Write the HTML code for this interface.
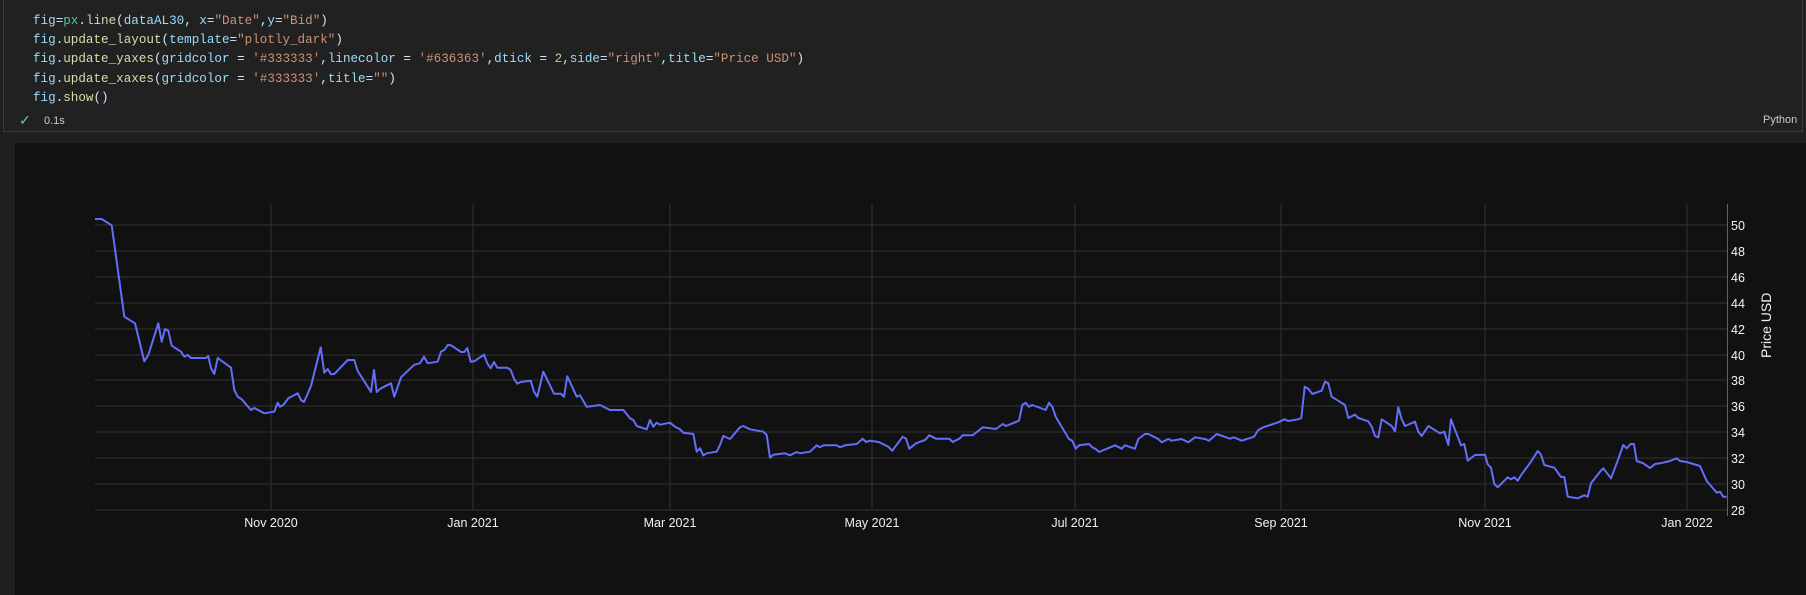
<!DOCTYPE html>
<html><head><meta charset="utf-8"><style>
html,body{margin:0;padding:0;width:1806px;height:595px;background:#1f1f1f;overflow:hidden;font-family:"Liberation Sans",sans-serif}
.cell{position:absolute;left:3px;top:-1px;width:1798px;height:131px;border:1px solid #3a3a3a;background:#212121}
.code{position:absolute;left:33px;top:12px;font-family:"Liberation Mono",monospace;font-size:12.6px;line-height:19.2px;color:#cfe6ff;white-space:pre}
.v{color:#9cdcfe}.g{color:#4ec9b0}.f{color:#dcdcaa}.s{color:#ce9178}.n{color:#b5cea8}
.out{position:absolute;left:15px;top:143px;width:1791px;height:452px;background:#111111}
</style></head><body>
<div class="cell"></div>
<div class="code"><span class="v">fig</span>=<span class="g">px</span>.<span class="f">line</span>(<span class="v">dataAL30</span>, <span class="v">x</span>=<span class="s">"Date"</span>,<span class="v">y</span>=<span class="s">"Bid"</span>)
<span class="v">fig</span>.<span class="f">update_layout</span>(<span class="v">template</span>=<span class="s">"plotly_dark"</span>)
<span class="v">fig</span>.<span class="f">update_yaxes</span>(<span class="v">gridcolor</span> = <span class="s">'#333333'</span>,<span class="v">linecolor</span> = <span class="s">'#636363'</span>,<span class="v">dtick</span> = <span class="n">2</span>,<span class="v">side</span>=<span class="s">"right"</span>,<span class="v">title</span>=<span class="s">"Price USD"</span>)
<span class="v">fig</span>.<span class="f">update_xaxes</span>(<span class="v">gridcolor</span> = <span class="s">'#333333'</span>,<span class="v">title</span>=<span class="s">""</span>)
<span class="v">fig</span>.<span class="f">show</span>()</div>
<div style="position:absolute;left:19px;top:112px;color:#73c991;font-size:14px">✓</div>
<div style="position:absolute;left:44px;top:115px;color:#cccccc;font-size:11px">0.1s</div>
<div style="position:absolute;left:1763px;top:114px;color:#cccccc;font-size:11px">Python</div>
<div class="out"></div>
<svg style="position:absolute;left:0;top:0" width="1806" height="595">
<g stroke="#333333" stroke-width="1">
<line x1="95" x2="1727" y1="225" y2="225"/><line x1="95" x2="1727" y1="251" y2="251"/><line x1="95" x2="1727" y1="277" y2="277"/><line x1="95" x2="1727" y1="303" y2="303"/><line x1="95" x2="1727" y1="329" y2="329"/><line x1="95" x2="1727" y1="355" y2="355"/><line x1="95" x2="1727" y1="380" y2="380"/><line x1="95" x2="1727" y1="406" y2="406"/><line x1="95" x2="1727" y1="432" y2="432"/><line x1="95" x2="1727" y1="458" y2="458"/><line x1="95" x2="1727" y1="484" y2="484"/><line x1="95" x2="1727" y1="510" y2="510"/>
<line x1="271" x2="271" y1="204" y2="510"/><line x1="473" x2="473" y1="204" y2="510"/><line x1="670" x2="670" y1="204" y2="510"/><line x1="872" x2="872" y1="204" y2="510"/><line x1="1075" x2="1075" y1="204" y2="510"/><line x1="1281" x2="1281" y1="204" y2="510"/><line x1="1485" x2="1485" y1="204" y2="510"/><line x1="1687" x2="1687" y1="204" y2="510"/>
</g>
<line x1="1727.5" x2="1727.5" y1="204" y2="516" stroke="#636363"/>
<polyline fill="none" stroke="#636efa" stroke-width="2" stroke-linejoin="round" points="95,219 101.7,219 111.7,225.3 124.3,316.7 135,323.3 144.3,361.3 148.3,355 158.3,323.3 161.7,341.7 165,329 168.3,330.7 171.7,345.7 181,351.7 184.3,356.7 187.7,355 191,358 206,358 208.3,356 211,368.3 214.3,374 217.7,358 231,367.7 234.3,390 237.7,396.7 241.7,399.3 251,410 254.3,408 264.3,413.3 274.3,411.7 277.7,402.7 280,406.7 283.3,405 288.3,398.3 297.7,393.3 301,400 304,402 311,386 320.7,347.3 324.3,372.7 327.7,369 331,374.3 334.3,374 347.7,360 354.3,360 357.7,371 371,392 374,370 376.7,392 381,388.3 391,383.3 394.3,396.7 401,377.3 414.3,364.7 420,363.3 424,356.7 427.7,363.3 437.7,361.7 441,351.7 444.3,350 447.7,345 451,345.3 461,352 464.3,352 467.3,348 470.7,361.7 474.3,361.3 484,354.7 487.3,363.3 490.7,368.3 494,362 497.3,367.7 507.3,367.7 510.7,370 514,378.7 517.3,383.7 520.7,382 530.7,380.7 534,391.7 537.3,396.7 543.3,371.7 554,393.7 560.7,393.7 564,396.7 567.3,376.3 576.7,396.7 580,395.3 586.7,406.7 593.3,406 600,405 610,410 623.3,410 630,418.3 633.3,420 636.7,426 646.7,429.3 650,420 653.3,426.7 656.7,422.7 660,424.7 670,422.7 675,426.7 680,429.3 683.3,432.7 693.3,434 696.7,451.7 700,448.3 703.3,455.3 706.7,453.3 716.7,451.7 720,445 723.3,436 730,439 740,427.3 743.3,426 750,429.3 763.3,431.7 766.7,435 770,457.7 773.3,454.7 785,453.3 790,455.3 796.7,452 800,453.3 810,451.7 816.7,445.3 820,447.3 823.3,445.3 836.7,445.3 840,447.3 845,445.3 856.7,444 862.7,438.7 866,442 870,440.7 878.7,442 888.3,446.7 892.3,450.7 902.7,436.7 906,438.7 909.3,448.7 916,443.3 925,440 929.3,435.3 936,438.7 949.3,438.7 952.7,442 959.3,438.7 962.7,435.3 972.7,435.3 982.7,427.3 996,429 1002.7,424 1006,426 1019,420.7 1022.3,405 1025.7,402.7 1029,406.7 1032.3,405 1045.7,410 1049,402.7 1052.3,406.7 1055.7,416.7 1069,439 1072.3,440.7 1075.7,448.7 1079,445.3 1089,444 1092.3,447.3 1095.7,449 1099,452 1115,445.3 1121.7,448.7 1125,445.3 1135,448.7 1138.3,439 1145,434 1148.3,434 1158.3,439 1161.7,442.3 1168.3,439 1171.7,440.7 1181.7,439 1188.3,442.3 1195,437.3 1205,439 1209,440.7 1216.7,434 1230,438.7 1234,437.3 1241.7,440.7 1254,436.7 1258.3,430 1263.3,427.3 1278.3,422.3 1284.3,419.3 1288.3,421 1298.3,419.3 1301.3,418 1304.7,386.7 1308.3,388.7 1312.3,394 1321.7,390.7 1325,381.7 1328.3,383.3 1331.7,396.7 1345,405 1348.3,418 1355,414.7 1358.3,418 1368.3,421.3 1371.7,426.7 1375,436 1378.3,437.3 1381.7,419.3 1391.7,426 1395,431.3 1398.3,407.3 1401.7,419.3 1405,426 1415,421.7 1418.3,431.7 1421.7,436 1428.3,426 1440,433.3 1444.3,431.7 1448.3,445 1451,419.3 1461,445.3 1464.3,444 1467.7,460.7 1475,455 1485,454.7 1487.7,464.3 1491,467.7 1494.3,484 1497.7,487.3 1507.7,477.3 1511,479.3 1514.3,477.3 1517.7,480.7 1521,475.3 1531,461.7 1537.7,451 1541,454.7 1544.3,465 1554.3,467.7 1561,477 1564.3,477 1567.7,496.7 1577.7,498.3 1584.3,495.3 1587.7,496.7 1591,483.3 1600,471.7 1603.3,468.3 1611,478.3 1617.3,461.7 1623.3,445 1626.7,448.3 1630.7,444 1634,444 1636.7,461 1643.3,463.3 1650,468 1655,464 1660,463.3 1670,461 1676.7,458.3 1680,461 1686.7,462 1700,466 1706.7,481 1716.7,492.7 1720,491.7 1723.3,496.7 1726.7,496.7"/>
<g fill="#f2f2f2" font-family="Liberation Sans, sans-serif" font-size="12.5" text-anchor="middle">
<text x="271" y="527">Nov 2020</text><text x="473" y="527">Jan 2021</text><text x="670" y="527">Mar 2021</text><text x="872" y="527">May 2021</text><text x="1075" y="527">Jul 2021</text><text x="1281" y="527">Sep 2021</text><text x="1485" y="527">Nov 2021</text><text x="1687" y="527">Jan 2022</text>
</g>
<g fill="#f2f2f2" font-family="Liberation Sans, sans-serif" font-size="12.5">
<text x="1731" y="230">50</text><text x="1731" y="256">48</text><text x="1731" y="282">46</text><text x="1731" y="308">44</text><text x="1731" y="334">42</text><text x="1731" y="360">40</text><text x="1731" y="385">38</text><text x="1731" y="411">36</text><text x="1731" y="437">34</text><text x="1731" y="463">32</text><text x="1731" y="489">30</text><text x="1731" y="515">28</text>
</g>
<text x="0" y="0" transform="translate(1771,358) rotate(-90)" fill="#f2f2f2" font-family="Liberation Sans, sans-serif" font-size="14">Price USD</text>
</svg>
</body></html>
